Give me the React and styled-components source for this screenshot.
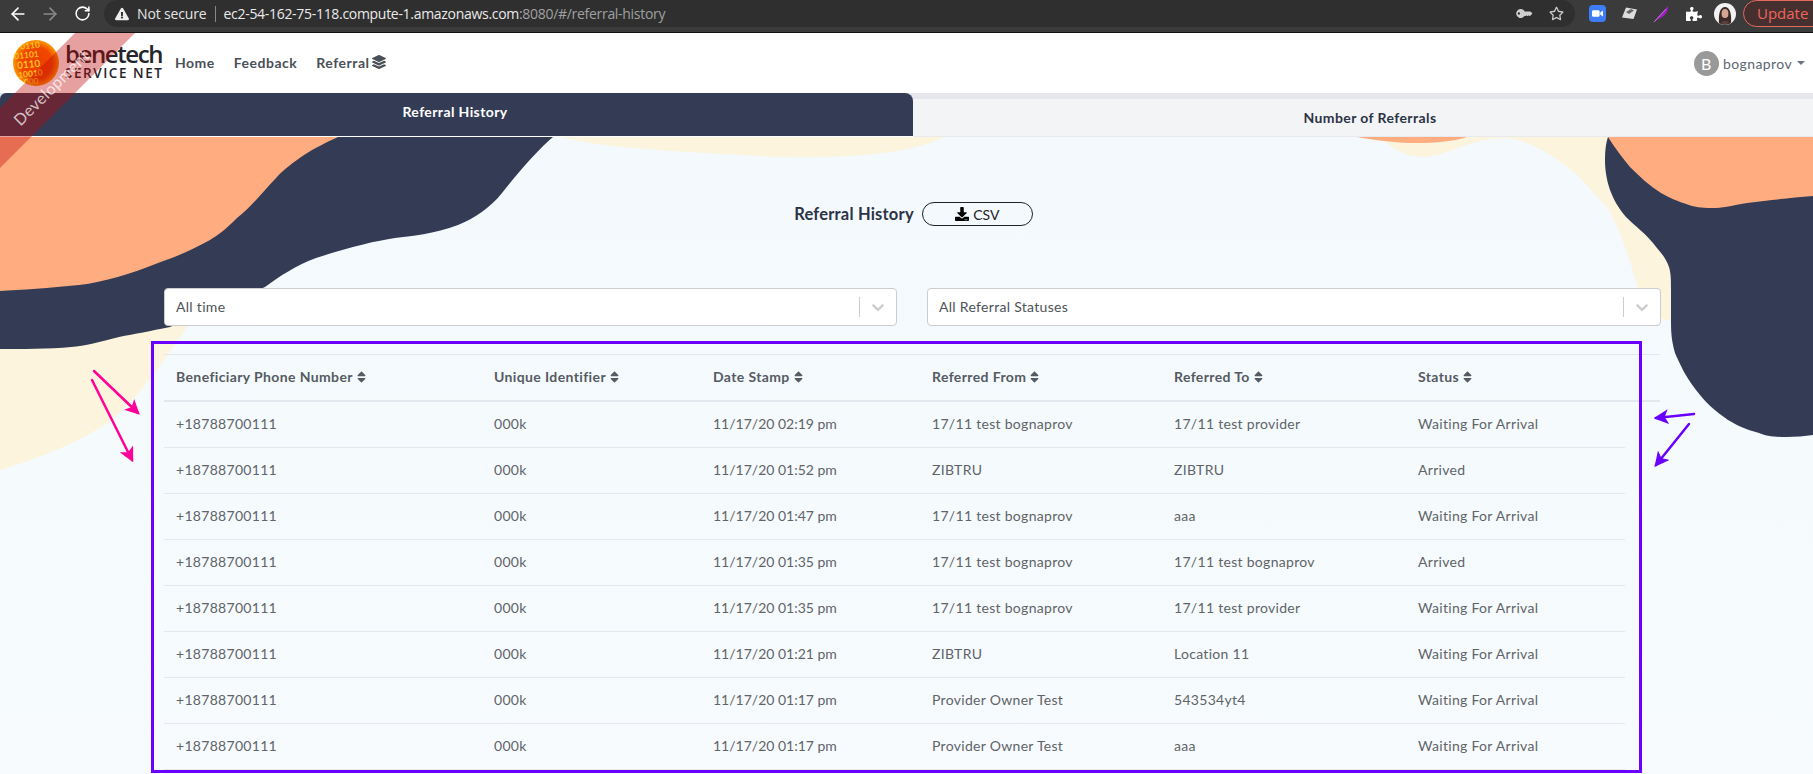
import React from 'react';
import styled, { createGlobalStyle } from 'styled-components';
import { FaLayerGroup, FaDownload, FaSort, FaPuzzlePiece, FaKey, FaRegStar, FaExclamationTriangle } from 'react-icons/fa';
import { ArrowLeft, ArrowRight, RotateCw } from 'lucide-react';

const Global = createGlobalStyle`
  * { box-sizing: border-box; }
  html, body { margin: 0; padding: 0; background: #f4f9fc; }
  body { font-family: Lato, "Liberation Sans", sans-serif; overflow: hidden; width: 1813px; height: 774px; }
`;

const Page = styled.div`
  position: relative;
  width: 1813px;
  height: 774px;
  overflow: hidden;
  display: flex;
  flex-direction: column;
`;

/* browser chrome */
const Chrome = styled.div`
  flex: 0 0 33px;
  background: #3b3b3b;
  border-bottom: 1px solid #111;
  display: flex;
  align-items: flex-start;
  color: #fff;
  font-family: "Open Sans", sans-serif;
`;
const NavButtons = styled.div`
  flex: 0 0 104px;
  height: 27px;
  display: flex;
  align-items: center;
  gap: 12px;
  padding-left: 8px;
`;
const Omnibox = styled.div`
  flex: 0 0 1471px;
  height: 27px;
  background: #2f2f2f;
  border-radius: 0 14px 14px 14px;
  border-top-left-radius: 14px;
  display: flex;
  align-items: center;
  padding: 0 10px 0 11px;
  font-size: 14px;
`;
const Secure = styled.span`
  margin-left: 8px;
  color: #e4e4e4;
  letter-spacing: -0.15px;
`;
const Sep = styled.span`
  width: 1px;
  height: 16px;
  background: #888;
  margin: 0 8px;
`;
const Host = styled.span`
  color: #eaeaea;
  letter-spacing: -0.3px;
`;
const UrlRest = styled.span`
  color: #a0a0a0;
  letter-spacing: -0.3px;
`;
const OmniRight = styled.div`
  margin-left: auto;
  display: flex;
  align-items: center;
  gap: 19px;
  padding-right: 1px;
  color: #cfcfcf;
`;
const Extensions = styled.div`
  flex: 1;
  height: 27px;
  display: flex;
  align-items: center;
  padding-left: 14px;
  gap: 15px;
`;
const Puzzle = styled(FaPuzzlePiece)`
  width: 16px;
  height: 16px;
  margin-left: 2px;
  margin-right: -3px;
  color: #fff;
  flex: none;
`;
const UpdatePill = styled.div`
  height: 27px;
  width: 90px;
  margin-left: -8px;
  margin-right: -22px;
  border: 1px solid #e56a60;
  border-radius: 14px;
  background: #45302f;
  color: #f0655c;
  font-size: 15px;
  line-height: 25px;
  padding-left: 13px;
  flex: none;
`;

/* app header */
const Header = styled.header`
  flex: 0 0 60px;
  background: #fff;
  display: flex;
  align-items: center;
  padding: 0 8px 0 13px;
`;
const Brand = styled.div`
  display: flex;
  align-items: center;
  gap: 6px;
  width: 162px;
`;
const BrandText = styled.div`
  display: flex;
  flex-direction: column;
  color: #24252b;
  line-height: 1;
`;
const BrandName = styled.span`
  font-family: "Open Sans", sans-serif;
  font-size: 24px;
  font-weight: 600;
  letter-spacing: -1.4px;
  line-height: 25px;
  height: 25px;
  margin-top: -6px;
`;
const BrandSub = styled.span`
  font-family: "Open Sans", sans-serif;
  font-size: 13.5px;
  font-weight: 600;
  letter-spacing: 1.55px;
  line-height: 14px;
  white-space: nowrap;
`;
const Nav = styled.nav`
  display: flex;
  align-items: center;
  gap: 19px;
  font-size: 14px;
  font-weight: 700;
  color: #495057;
  letter-spacing: 0.5px;
  padding-bottom: 2px;
`;
const NavItem = styled.span`
  display: inline-flex;
  align-items: center;
  gap: 3px;
`;
const User = styled.div`
  margin-left: auto;
  display: flex;
  align-items: center;
  color: #5c6670;
  font-size: 14px;
  letter-spacing: 0.4px;
`;
const Avatar = styled.span`
  width: 25px;
  height: 25px;
  border-radius: 50%;
  background: #999;
  color: #fff;
  font-size: 16px;
  display: flex;
  align-items: center;
  justify-content: center;
  margin-right: 4px;
`;
const Caret = styled.span`
  width: 0;
  height: 0;
  margin-left: 5px;
  border-left: 4px solid transparent;
  border-right: 4px solid transparent;
  border-top: 4px solid #6c757d;
`;

/* tabs */
const Tabs = styled.div`
  flex: 0 0 44px;
  display: flex;
  background: #e6e7ec;
`;
const ActiveTab = styled.div`
  flex: 0 0 913px;
  background: #343c55;
  border-radius: 6px 8px 0 0;
  border-bottom: 1px solid #fff;
  color: #fff;
  font-size: 14px;
  font-weight: 700;
  letter-spacing: 0.4px;
  display: flex;
  align-items: center;
  justify-content: center;
  padding-bottom: 7px;
  padding-right: 3px;
`;
const OtherTab = styled.div`
  flex: 1;
  margin-top: 6px;
  background: #f3f4f6;
  border-bottom: 1px solid #e9eaee;
  color: #2b3345;
  font-size: 14px;
  font-weight: 700;
  display: flex;
  align-items: center;
  justify-content: center;
  padding-left: 14px;
  letter-spacing: 0.4px;
`;

/* content */
const Main = styled.main`
  position: relative;
  flex: 1;
  padding-top: 65px;
  background: linear-gradient(#f3f9fc, #f7fbfe);
`;
const Backdrop = styled.svg`
  position: absolute;
  left: 0;
  top: 0;
  z-index: 0;
`;
const Content = styled.div`
  position: relative;
  z-index: 1;
`;
const TitleRow = styled.div`
  display: flex;
  justify-content: center;
  align-items: center;
  gap: 8px;
  height: 24px;
  padding-left: 14px;
`;
const Title = styled.h1`
  margin: 0;
  font-size: 16.5px;
  font-weight: 700;
  letter-spacing: 0.2px;
  color: #2b3345;
`;
const CsvButton = styled.button`
  width: 111px;
  height: 24px;
  background: transparent;
  border: 1px solid #222;
  border-radius: 12px;
  display: flex;
  align-items: center;
  justify-content: center;
  gap: 4px;
  color: #222;
  font: 400 14px Lato, sans-serif;
  padding: 0;
`;
const Filters = styled.div`
  display: grid;
  grid-template-columns: 733px 734px;
  gap: 30px;
  margin: 62px 0 0 164px;
`;
const Select = styled.div`
  height: 38px;
  background: #fff;
  border: 1px solid #ccc;
  border-radius: 4px;
  display: flex;
  align-items: center;
  padding-left: 11px;
  font-size: 14px;
  letter-spacing: 0.3px;
  color: #4d5358;
`;
const SelectLabel = styled.span`
  padding-bottom: 2px;
`;
const SelectIndicator = styled.span`
  margin-left: auto;
  display: flex;
  align-items: center;
  height: 20px;
  border-left: 1px solid #ccc;
  padding: 0 8px;
  color: #ccc;
`;
const TableWrap = styled.section`
  margin: 28px 0 0 164px;
  width: 1496px;
  border-top: 1px solid #e4e8ee;
  font-size: 14px;
`;
const Row = styled.div`
  display: grid;
  grid-template-columns: 318px 219px 219px 242px 244px 219px;
  width: ${p => (p.$head ? '1496px' : '1461px')};
  height: ${p => (p.$head ? '47px' : '46px')};
  border-bottom: ${p => (p.$head ? '2px solid #e4e8ee' : '1px solid #e4e8ee')};
  align-items: center;
  padding-bottom: 2px;
  color: ${p => (p.$head ? '#555b63' : '#5f6469')};
  font-weight: ${p => (p.$head ? 700 : 400)};
  letter-spacing: ${p => (p.$head ? '0.38px' : '0.3px')};
`;
const Cell = styled.div`
  padding-left: 12px;
  white-space: nowrap;
  display: flex;
  align-items: center;
  gap: 4px;
`;
const DateCell = styled(Cell)`
  letter-spacing: 0;
`;
const SortIcon = styled(FaSort)`
  width: 9px;
  height: 14px;
  flex: none;
`;

/* annotations */
const Highlight = styled.div`
  position: absolute;
  left: 151px;
  top: 341px;
  width: 1491px;
  height: 432px;
  border: 3px solid #6a00ff;
  z-index: 3;
  pointer-events: none;
`;
const Arrows = styled.svg`
  position: absolute;
  left: 0;
  top: 0;
  z-index: 4;
  pointer-events: none;
`;
const Ribbon = styled.div`
  position: absolute;
  left: 0;
  top: 33px;
  width: 135px;
  height: 135px;
  clip-path: polygon(75px 0, 135px 0, 0 135px, 0 75px);
  background: rgba(190, 5, 5, 0.38);
  z-index: 5;
`;
const RibbonText = styled.span`
  position: absolute;
  left: 51px;
  top: 54px;
  transform: translate(-50%, -50%) rotate(-45deg);
  color: rgba(255, 255, 255, 0.72);
  font-size: 16px;
  letter-spacing: 0.4px;
  white-space: nowrap;
`;

const rows = [
  ['11/17/20 02:19 pm', '17/11 test bognaprov', '17/11 test provider', 'Waiting For Arrival'],
  ['11/17/20 01:52 pm', 'ZIBTRU', 'ZIBTRU', 'Arrived'],
  ['11/17/20 01:47 pm', '17/11 test bognaprov', 'aaa', 'Waiting For Arrival'],
  ['11/17/20 01:35 pm', '17/11 test bognaprov', '17/11 test bognaprov', 'Arrived'],
  ['11/17/20 01:35 pm', '17/11 test bognaprov', '17/11 test provider', 'Waiting For Arrival'],
  ['11/17/20 01:21 pm', 'ZIBTRU', 'Location 11', 'Waiting For Arrival'],
  ['11/17/20 01:17 pm', 'Provider Owner Test', '543534yt4', 'Waiting For Arrival'],
  ['11/17/20 01:17 pm', 'Provider Owner Test', 'aaa', 'Waiting For Arrival'],
];
const heads = ['Beneficiary Phone Number', 'Unique Identifier', 'Date Stamp', 'Referred From', 'Referred To', 'Status'];

const Chevron = () => (
  <svg width="20" height="20" viewBox="0 0 20 20" fill="currentColor">
    <path d="M4.516 7.548c0.436-0.446 1.043-0.481 1.576 0l3.908 3.747 3.908-3.747c0.533-0.481 1.141-0.446 1.574 0 0.436 0.445 0.408 1.197 0 1.615-0.406 0.418-4.695 4.502-4.695 4.502-0.217 0.223-0.502 0.335-0.787 0.335s-0.57-0.112-0.789-0.335c0 0-4.287-4.084-4.695-4.502s-0.436-1.17 0-1.615z" />
  </svg>
);

const Logo = () => (
  <svg width="46" height="46" viewBox="0 0 46 46">
    <defs>
      <clipPath id="lc"><circle cx="23" cy="23" r="23" /></clipPath>
      <radialGradient id="lg" cx="50%" cy="50%" r="50%">
        <stop offset="0%" stopColor="#ee3c00" />
        <stop offset="70%" stopColor="#f04800" />
        <stop offset="100%" stopColor="#fb9a00" />
      </radialGradient>
    </defs>
    <circle cx="23" cy="23" r="23" fill="url(#lg)" />
    <g clipPath="url(#lc)" fill="#ffc020" fontFamily="Lato, sans-serif" fontWeight="700" fontSize="8.500" transform="rotate(-6 23 23)">
      <text x="9" y="8">0110</text>
      <text x="2" y="17">01101</text>
      <text x="4" y="27" fontSize="10">0110</text>
      <text x="4" y="36">10010</text>
      <text x="9" y="44">000</text>
    </g>
  </svg>
);

const ZoomIcon = () => (
  <svg width="17" height="17" viewBox="0 0 17 17">
    <rect width="17" height="17" rx="4" fill="#3f7cf7" />
    <rect x="3" y="5.2" width="7.6" height="6.6" rx="1.4" fill="#fff" />
    <path d="M11.2 7.5 14 5.6v5.8l-2.8-1.9z" fill="#fff" />
  </svg>
);
const BoxIcon = () => (
  <svg width="17" height="15" viewBox="0 0 17 15">
    <path d="M5 1.500 16 3.500 12.500 13 1 11.500z" fill="#ddd" />
    <path d="M5 6l5-3 3 1.500-5 3.500z" fill="#666" />
  </svg>
);
const FeatherIcon = () => (
  <svg width="16" height="18" viewBox="0 0 16 18">
    <path d="M1 17 15 1c.6 3-1 7.500-5 10.500C7 13.500 4.500 14 1 17z" fill="#a01fc0" />
    <path d="M1 17 13 4" stroke="#d78bf0" strokeWidth=".8" />
  </svg>
);
const Profile = () => (
  <svg width="22" height="22" viewBox="0 0 22 22" style={{ flex: 'none' }}>
    <circle cx="11" cy="11" r="11" fill="#f2f2f2" />
    <path d="M5 20c-.5-6 0-16 6-16s6.500 10 6 16c-3 2.400-9 2.400-12 0z" fill="#3a2a28" />
    <ellipse cx="11" cy="10.500" rx="3.400" ry="4.600" fill="#d5a691" />
    <path d="M7 20c1-3 7-3 8 0-2 1.500-6 1.500-8 0z" fill="#5a4038" />
  </svg>
);

const Backgrounds = () => (
  <Backdrop width="1813" height="637" viewBox="0 137 1813 637">
    <path fill="#fcf4dc" d="M0 300 L200 300 C190 325 175 345 166 357 C150 380 130 405 111 420 C85 440 40 458 0 470Z" />
    <path fill="#fcf4dc" d="M561 137 C590 145 640 149 689 152 C740 155 780 158 823 157 C865 156 915 152 944 137Z" />
    <path fill="#fcf4dc" d="M1380 137 C1390 147 1405 157 1423 157 C1445 157 1470 138 1505 138 C1525 139 1550 152 1575 173 C1590 188 1600 200 1607 207 C1620 228 1630 260 1638 288 L1660 318 L1680 324 L1680 137Z" />
    <path fill="#ffad80" d="M1357 137 C1380 141 1400 143 1417 143 C1435 143 1455 141 1467 137Z" />
    <path fill="#343c55" d="M320 137 L553 137 C540 148 520 170 502 193 C490 208 475 218 458 225 C435 234 410 236 395 238 C375 241 350 247 316 258 C295 266 280 276 265 287 L170 327 C150 331 135 334 119 337 C100 342 85 346 71 347 C50 349 20 349 0 349 L0 280Z" />
    <path fill="#ffad80" d="M0 137 L338 137 C325 143 315 148 304 155 C293 163 285 168 277 177 C262 193 250 208 237 218 C225 230 218 235 210 240 C190 251 175 257 158 263 C130 274 105 282 79 285 C50 288 20 290 0 291Z" />
    <path fill="#343c55" d="M1608 137 L1813 137 L1813 435 C1805 436 1795 437 1786 437 C1775 437 1765 436 1759 433 C1745 429 1738 426 1728 420 C1715 411 1705 402 1696 390 C1685 376 1680 364 1675 353 C1672 342 1671 335 1671 322 L1671 290 C1671 280 1671 274 1669 267 C1665 256 1660 252 1653 243 C1645 233 1635 226 1626 217 C1618 208 1613 198 1610 190 C1606 178 1605 168 1605 160 C1605 150 1606 143 1608 137Z" />
    <path fill="#ffad80" d="M1608 137 L1813 137 L1813 196 C1790 198 1770 200 1747 203 C1730 206 1722 208 1712 208 C1700 208 1695 207 1689 205 C1677 201 1670 198 1661 193 C1650 186 1640 177 1630 167 C1622 157 1615 148 1608 137Z" />
  </Backdrop>
);

export default function App() {
  return (
    <Page>
      <Global />
      <Chrome>
        <NavButtons>
          <ArrowLeft size={20} color="#fff" strokeWidth={2} />
          <ArrowRight size={20} color="#8a8a8a" strokeWidth={2} />
          <RotateCw size={17} color="#fff" strokeWidth={2.2} style={{ marginLeft: 2 }} />
        </NavButtons>
        <Omnibox>
          <FaExclamationTriangle size={14} color="#eee" />
          <Secure>Not secure</Secure>
          <Sep />
          <Host>ec2-54-162-75-118.compute-1.amazonaws.com</Host>
          <UrlRest>:8080/#/referral-history</UrlRest>
          <OmniRight>
            <FaKey size={13} style={{ transform: 'scaleX(-1) rotate(45deg)' }} />
            <FaRegStar size={15} />
          </OmniRight>
        </Omnibox>
        <Extensions>
          <ZoomIcon />
          <BoxIcon />
          <FeatherIcon />
          <Puzzle />
          <Profile />
          <UpdatePill>Update</UpdatePill>
        </Extensions>
      </Chrome>

      <Header>
        <Brand>
          <Logo />
          <BrandText>
            <BrandName>benetech</BrandName>
            <BrandSub>SERVICE NET</BrandSub>
          </BrandText>
        </Brand>
        <Nav>
          <NavItem>Home</NavItem>
          <NavItem>Feedback</NavItem>
          <NavItem>Referral <FaLayerGroup size={14} /></NavItem>
        </Nav>
        <User>
          <Avatar>B</Avatar>
          bognaprov
          <Caret />
        </User>
      </Header>

      <Tabs>
        <ActiveTab>Referral History</ActiveTab>
        <OtherTab>Number of Referrals</OtherTab>
      </Tabs>

      <Main>
        <Backgrounds />
        <Content>
          <TitleRow>
            <Title>Referral History</Title>
            <CsvButton><FaDownload size={14} color="#000" /> CSV</CsvButton>
          </TitleRow>
          <Filters>
            <Select><SelectLabel>All time</SelectLabel><SelectIndicator><Chevron /></SelectIndicator></Select>
            <Select><SelectLabel>All Referral Statuses</SelectLabel><SelectIndicator><Chevron /></SelectIndicator></Select>
          </Filters>
          <TableWrap>
            <Row $head>
              {heads.map(h => <Cell key={h}>{h} <SortIcon /></Cell>)}
            </Row>
            {rows.map((r, i) => (
              <Row key={i}>
                <Cell>+18788700111</Cell>
                <Cell>000k</Cell>
                <DateCell>{r[0]}</DateCell>
                <Cell>{r[1]}</Cell>
                <Cell>{r[2]}</Cell>
                <Cell>{r[3]}</Cell>
              </Row>
            ))}
          </TableWrap>
        </Content>
      </Main>

      <Highlight />
      <Arrows width="1813" height="774" viewBox="0 0 1813 774">
        <defs>
          <marker id="pk" markerWidth="6" markerHeight="6" refX="5" refY="3" orient="auto"><path d="M0 0 6 3 0 6 1.500 3z" fill="#ff0099" /></marker>
          <marker id="pu" markerWidth="6" markerHeight="6" refX="5" refY="3" orient="auto"><path d="M0 0 6 3 0 6 1.500 3z" fill="#6a00ff" /></marker>
        </defs>
        <g fill="none" strokeWidth="2.500" strokeLinecap="round">
          <path d="M94 371 138 413" stroke="#ff0099" markerEnd="url(#pk)" />
          <path d="M92 380 132 460" stroke="#ff0099" markerEnd="url(#pk)" />
          <path d="M1694 414 1656 418" stroke="#6a00ff" markerEnd="url(#pu)" />
          <path d="M1689 424 1656 465" stroke="#6a00ff" markerEnd="url(#pu)" />
        </g>
      </Arrows>
      <Ribbon><RibbonText>Development</RibbonText></Ribbon>
    </Page>
  );
}
